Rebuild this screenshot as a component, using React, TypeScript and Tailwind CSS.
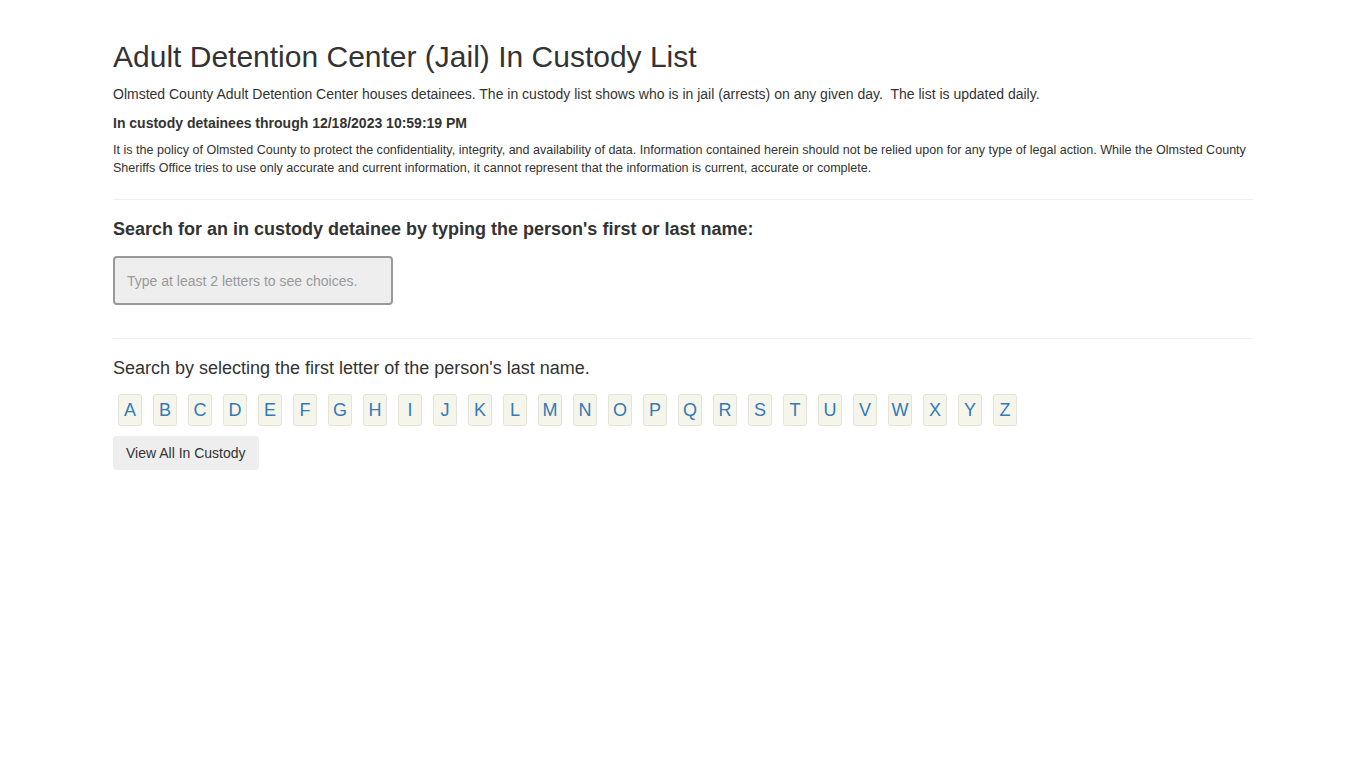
const letters = 'ABCDEFGHIJKLMNOPQRSTUVWXYZ'.split('');

function App() {
  return (
    <div className="min-h-screen bg-white text-[#333] font-['Liberation_Sans',Arial,sans-serif]">
      <div className="mx-auto w-[1170px] px-[15px] pt-[39px]">
        <h1 className="mb-[9px] text-[30px] leading-[36px] font-normal">
          Adult Detention Center (Jail) In Custody List
        </h1>
        <p className="text-[14px] leading-[20px] mb-[9px]">
          Olmsted County Adult Detention Center houses detainees. The in custody list shows who is in jail (arrests) on any given day.&nbsp; The list is updated daily.
        </p>
        <p className="text-[14px] leading-[20px] font-bold mb-[8px]">
          In custody detainees through 12/18/2023 10:59:19 PM
        </p>
        <p className="text-[12.55px] leading-[18px]">
          It is the policy of Olmsted County to protect the confidentiality, integrity, and availability of data. Information contained herein should not be relied upon for any type of legal action. While the Olmsted County Sheriffs Office tries to use only accurate and current information, it cannot represent that the information is current, accurate or complete.
        </p>
        <hr className="mt-[22px] mb-[19px] border-t border-[#eee]" />
        <h4 className="text-[18px] leading-[20px] font-bold mb-[17px]">
          Search for an in custody detainee by typing the person's first or last name:
        </h4>
        <input
          type="text"
          placeholder="Type at least 2 letters to see choices."
          className="block w-[280px] h-[49px] px-[12px] text-[14px] bg-[#eee] border-2 border-[#999] rounded-[4px] placeholder:text-[#999] outline-none"
        />
        <hr className="mt-[33px] mb-[19px] border-t border-[#eee]" />
        <p className="text-[18px] leading-[20px] mb-[16px]">
          Search by selecting the first letter of the person's last name.
        </p>
        <div className="flex gap-[11px] pl-[5px] mb-[10px]">
          {letters.map((l) => (
            <a
              key={l}
              href="#"
              className="flex items-center justify-center w-[24px] h-[32px] bg-[#f5f5ec] border border-[#e3e3d6] rounded-[3px] text-[18px] text-[#337ab7]"
            >
              {l}
            </a>
          ))}
        </div>
        <button
          type="button"
          className="h-[34px] px-[13px] bg-[#eee] rounded-[4px] text-[14px] text-[#333]"
        >
          View All In Custody
        </button>
      </div>
    </div>
  );
}

export default App;
